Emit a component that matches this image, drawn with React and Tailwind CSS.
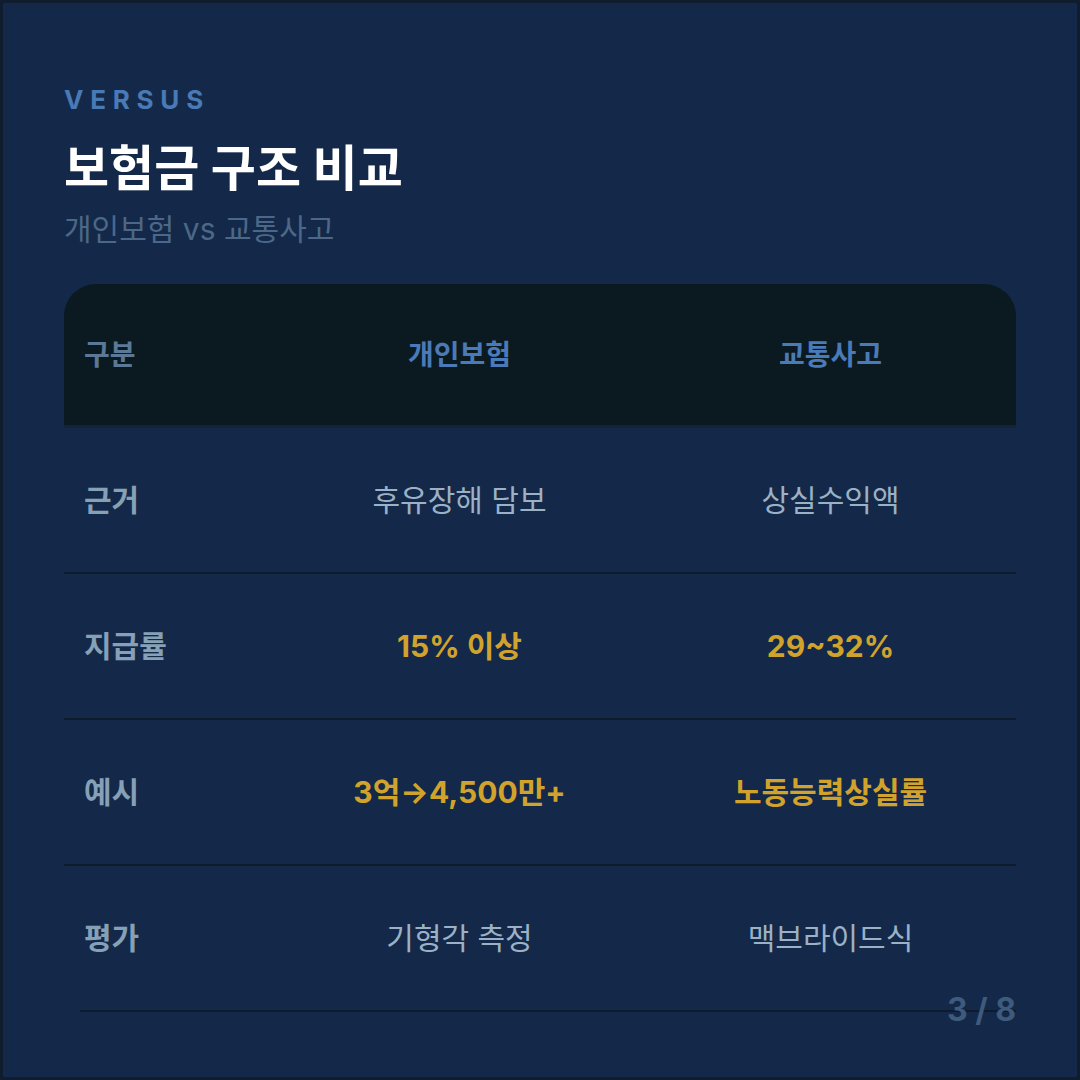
import React from 'react';

const rows = [
  { label: '근거', a: '후유장해 담보', b: '상실수익액', hl: false },
  { label: '지급률', a: '15% 이상', b: '29~32%', hl: true },
  { label: '예시', a: '3억→4,500만+', b: '노동능력상실률', hl: true },
  { label: '평가', a: '기형각 측정', b: '맥브라이드식', hl: false },
];

export default function App() {
  return (
    <div
      className="relative w-[1080px] h-[1080px] overflow-hidden border-[3px] border-[#0f1d2e] bg-[#142949] px-[61px] pt-[81px]"
      style={{ fontFamily: '"Inter", "Noto Sans CJK KR", sans-serif' }}
    >
      {/* Heading */}
      <div className="text-[26px] leading-[32px] font-bold tracking-[0.26em] text-[#4a7ab5]">VERSUS</div>
      <h1 className="mt-[25px] text-[49px] leading-[56px] font-bold text-white">보험금 구조 비교</h1>
      <p className="mt-[14px] text-[30px] leading-[36px] text-[#4b6888]">개인보험 vs 교통사고</p>

      {/* Comparison table */}
      <div className="mt-[37px] w-[952px]">
        <div className="grid grid-cols-[210px_371px_371px] h-[144px] items-center rounded-t-[32px] bg-[#0b1920] border-b-[3px] border-[#12233a]">
          <div className="pl-[20px] text-[28px] font-bold text-[#5b7996]">구분</div>
          <div className="text-center text-[28px] font-bold text-[#4a7ab8]">개인보험</div>
          <div className="text-center text-[28px] font-bold text-[#4a7ab8]">교통사고</div>
        </div>

        {rows.map((r, i) => (
          <div
            key={r.label}
            className={
              i < rows.length - 1
                ? 'grid grid-cols-[210px_371px_371px] h-[146px] items-center border-b-2 border-[#0e1b2c]'
                : 'grid grid-cols-[210px_371px_371px] h-[144px] items-center'
            }
          >
            <div className="pl-[20px] text-[30px] font-semibold text-[#86a0b6]">{r.label}</div>
            <div className={r.hl ? 'text-center text-[30px] font-bold text-[#d2a32c]' : 'text-center text-[30px] text-[#9bb1c6]'}>{r.a}</div>
            <div className={r.hl ? 'text-center text-[30px] font-bold text-[#d2a32c]' : 'text-center text-[30px] text-[#9bb1c6]'}>{r.b}</div>
          </div>
        ))}
        <div className="ml-4 h-[2px] bg-[#0e1b2c]" />
      </div>

      {/* Page indicator */}
      <div className="absolute right-[61px] bottom-[51px] text-[32px] leading-[32px] font-bold text-[#3e5a7c]">3 / 8</div>
    </div>
  );
}
